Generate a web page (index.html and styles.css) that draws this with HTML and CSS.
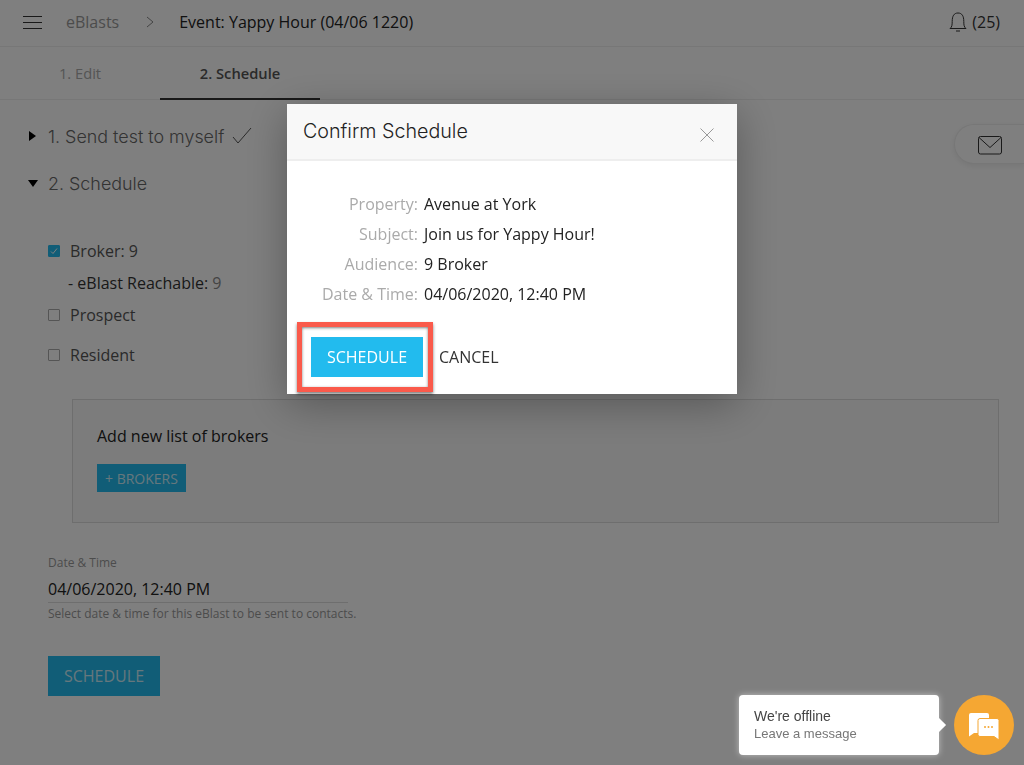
FILE: index.html
```html
<!DOCTYPE html>
<html lang="en">
<head>
<meta charset="utf-8">
<title>Event: Yappy Hour</title>
<link rel="stylesheet" href="styles.css">
</head>
<body>
<div class="page">
  <header class="topbar">
    <svg class="burger" width="19" height="13" viewBox="0 0 19 13"><path d="M0 .5h19M0 6.500h19M0 12.500h19" stroke="#333" fill="none"/></svg>
    <span class="crumb">eBlasts</span>
    <svg class="chev" width="8" height="12" viewBox="0 0 8 12"><path d="M1 1l6 5-6 5" stroke="#888" fill="none"/></svg>
    <span class="title">Event: Yappy Hour (04/06 1220)</span>
    <div class="notif">
      <svg width="18" height="20" viewBox="0 0 18 20"><path d="M1 16.500c2-1.500 2.200-3.500 2.200-7C3.200 4 5 1 9 1s5.800 3 5.800 8.500c0 3.500.2 5.500 2.200 7zM7 19h4" stroke="#333" fill="none"/></svg>
      <span>(25)</span>
    </div>
  </header>
  <nav class="tabs">
    <div class="tab">1. Edit</div>
    <div class="tab active">2. Schedule</div>
  </nav>
  <main class="content">
    <div class="mailtab"><svg width="24" height="20" viewBox="0 0 24 20"><rect x=".5" y="1.500" width="23" height="17.500" rx="2" stroke="#333" fill="none"/><path d="M1 2.500l11 10 11-10" stroke="#333" fill="none"/></svg></div>
    <h2 class="step"><span class="tri right"></span>1. Send test to myself<svg class="tick" width="20" height="18" viewBox="0 0 20 18"><path d="M1 10l5 6L19 1" stroke="#555" fill="none"/></svg></h2>
    <h2 class="step second"><span class="tri down"></span>2. Schedule</h2>
    <div class="audience">
      <div class="check first"><span class="box on"><svg width="12" height="12" viewBox="0 0 12 12"><path d="M3 6.500l2 2 4-5" stroke="#fff" fill="none"/></svg></span>Broker: 9</div>
      <div class="reach">- eBlast Reachable: <span class="muted">9</span></div>
      <div class="check"><span class="box"></span>Prospect</div>
      <div class="check gap"><span class="box"></span>Resident</div>
    </div>
    <section class="panel">
      <div class="panel-title">Add new list of brokers</div>
      <button class="btn small">+ BROKERS</button>
    </section>
    <div class="field">
      <label class="field-label">Date &amp; Time</label>
      <div class="field-value">04/06/2020, 12:40 PM</div>
      <div class="field-help">Select date &amp; time for this eBlast to be sent to contacts.</div>
    </div>
    <button class="btn big">SCHEDULE</button>
  </main>
</div>
<div class="overlay"></div>
<div class="modal">
  <div class="modal-head">
    <span class="modal-title">Confirm Schedule</span>
    <svg class="close" width="14" height="14" viewBox="0 0 14 14"><path d="M.5.5l13 13M13.500.5l-13 13" stroke="#999" fill="none"/></svg>
  </div>
  <div class="modal-body">
    <dl class="summary">
      <dt>Property:</dt><dd>Avenue at York</dd>
      <dt>Subject:</dt><dd>Join us for Yappy Hour!</dd>
      <dt>Audience:</dt><dd>9 Broker</dd>
      <dt>Date &amp; Time:</dt><dd>04/06/2020, 12:40 PM</dd>
    </dl>
    <div class="actions">
      <span class="highlight"><button class="btn confirm">SCHEDULE</button></span>
      <button class="cancel">CANCEL</button>
    </div>
  </div>
</div>
<div class="chat">
  <div class="bubble">
    <div class="b1">We're offline</div>
    <div class="b2">Leave a message</div>
  </div>
  <div class="chat-btn">
    <svg width="32" height="30" viewBox="0 0 32 30"><path d="M3 3h16a2 2 0 0 1 2 2v16a2 2 0 0 1-2 2H6l-5 3.500V5a2 2 0 0 1 2-2z" fill="#fff"/><path d="M12 8.500h17a2 2 0 0 1 2 2V30l-5-3.500H12a2 2 0 0 1-2-2v-14a2 2 0 0 1 2-2z" fill="#fff" stroke="#f5a733"/><circle cx="17" cy="17" r="1" fill="#f5a733"/><circle cx="20.500" cy="17" r="1" fill="#f5a733"/><circle cx="24" cy="17" r="1" fill="#f5a733"/></svg>
  </div>
</div>
</body>
</html>
```

FILE: styles.css
```css
* { box-sizing: border-box; }
html, body { margin: 0; height: 100%; overflow: hidden; }
body { font-family: "Open Sans", sans-serif; font-size: 16px; color: #333; background: #fff; }
.page { height: 765px; }
.topbar { display: flex; align-items: center; height: 47px; padding: 0 24px 3px 23px; border-bottom: 1px solid #eee; }
.burger { margin: 2px 24px 0 0; }
.crumb { color: #999; margin-right: 27px; }
.chev { margin-right: 25px; }
.title { color: #222; }
.notif { margin-left: auto; display: flex; align-items: center; gap: 5px; }
.tabs { display: flex; height: 53px; border-bottom: 1px solid #eee; }
.tab { width: 160px; height: 53px; line-height: 53px; text-align: center; font-size: 14.700px; color: #aaa; }
.tab.active { color: #555; font-weight: 600; border-bottom: 2px solid #333; }
.content { position: relative; padding: 22px 25px 0 28px; }
.mailtab { position: absolute; top: 24px; right: 0; width: 70px; height: 40px; padding: 10px 0 0 23px; border: 1px solid #eee; border-right: 0; border-radius: 20px 0 0 20px; box-shadow: 0 2px 6px rgba(0,0,0,.08); background: #fff; }
.mailtab svg { display: block; }
.step { display: flex; align-items: center; height: 28px; margin: 0; font-family: Inter, sans-serif; font-weight: 300; font-size: 17.900px; color: #666; }
.second { margin-top: 19px; }
.tri { width: 0; height: 0; margin-right: 11px; }
.tri.right { border-top: 5px solid transparent; border-bottom: 5px solid transparent; border-left: 7px solid #000; margin-left: 1px; margin-right: 12px; }
.tri.down { border-left: 5.500px solid transparent; border-right: 5.500px solid transparent; border-top: 7px solid #000; margin-right: 10px; }
.tick { margin-left: 8px; }
.audience { padding: 0 0 0 20px; margin-top: 42px; }
.check { display: flex; align-items: center; height: 24px; color: #555; }
.reach { height: 24px; margin: 8px 0 8px 20px; line-height: 24px; color: #333; }
.muted { color: #888; }
.gap { margin-top: 16px; }
.box { width: 12px; height: 12px; margin-right: 10px; border: 1px solid #aaa; border-radius: 1px; }
.box.on { background: #22bbee; border-color: #22bbee; }
.box svg { display: block; margin: -1px; }
.panel { margin: 32px 0 0 44px; height: 124px; padding: 24px 24px; border: 1px solid #ddd; background: #f8f8f8; }
.panel-title { color: #222; line-height: 24px; }
.btn { display: block; border: 0; font-family: "Open Sans", sans-serif; color: #fff; background: #22bbee; padding: 0; }
.btn.small { width: 89px; height: 28px; margin-top: 16px; font-size: 14px; color: #cdeefa; }
.field { margin: 32px 0 0 20px; }
.field-label { display: block; height: 16px; font-size: 12px; line-height: 16px; color: #999; }
.field-value { width: 300px; height: 32px; padding-top: 6px; line-height: 24px; color: #222; border-bottom: 1px solid #ddd; }
.field-help { margin-top: 3px; font-size: 12px; line-height: 16px; color: #999; }
.btn.big { width: 112px; height: 40px; margin: 34px 0 0 20px; font-size: 16px; color: #cdeefa; }
.overlay { position: fixed; inset: 0; background: rgba(0,0,0,.5); }
.modal { position: fixed; left: 287px; top: 104px; width: 450px; height: 290px; background: #fff; box-shadow: 0 10px 40px rgba(0,0,0,.3); }
.modal-head { display: flex; justify-content: space-between; height: 57px; padding: 14px 23px 0 16px; background: #f8f8f8; border-bottom: 2px solid #eee; }
.modal-title { font-family: Inter, sans-serif; font-weight: 300; font-size: 19.700px; line-height: 27px; color: #222; }
.close { margin-top: 10px; }
.modal-body { padding: 31px 0 0 10px; }
.summary { display: grid; grid-template-columns: 121px auto; column-gap: 6px; row-gap: 6px; margin: 0; line-height: 24px; }
.summary dt { text-align: right; color: #aaa; }
.summary dd { margin: 0; color: #222; }
.actions { display: flex; align-items: center; margin-top: 16px; }
.highlight { display: block; width: 136px; height: 70px; padding: 10px 0 0 9px; border: 5px solid #fa5a4b; box-shadow: 0 2px 3px rgba(0,0,0,.5), inset 0 1px 3px rgba(0,0,0,.5); }
.btn.confirm { width: 112px; height: 40px; font-size: 16px; }
.cancel { margin-left: 6px; padding: 0; border: 0; background: none; font-family: "Open Sans", sans-serif; font-size: 16px; color: #333; }
.chat { position: fixed; left: 739px; top: 695px; display: flex; align-items: center; gap: 15px; }
.bubble { position: relative; width: 200px; height: 60px; padding: 12px 15px; border-radius: 4px; background: #fff; box-shadow: 0 0 6px rgba(255,255,255,.5); font-family: "Liberation Sans", sans-serif; }
.bubble::after { content: ""; position: absolute; right: -5px; top: 25px; width: 10px; height: 10px; background: #fff; transform: rotate(45deg); }
.b1 { font-size: 14px; line-height: 18px; color: #444; }
.b2 { font-size: 13px; line-height: 18px; color: #777; }
.chat-btn { display: flex; align-items: center; justify-content: center; width: 60px; height: 60px; border-radius: 50%; background: #f5a733; }
```
